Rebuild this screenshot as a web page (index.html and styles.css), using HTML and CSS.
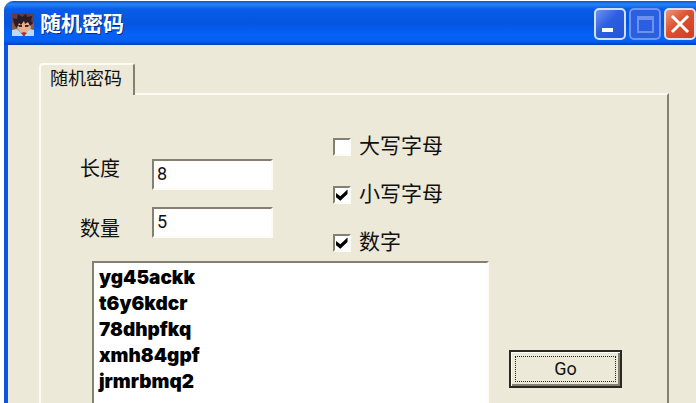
FILE: index.html
```
<!DOCTYPE html>
<html lang="zh-CN">
<head>
    <meta charset="UTF-8">
    <meta name="viewport" content="width=device-width, initial-scale=1.0">
    <title>随机密码</title>
    <link rel="stylesheet" href="styles.css">
</head>
<body>
    <div class="window">
        <header class="titlebar">
            <svg class="app-icon" viewBox="0 0 22 23" aria-hidden="true">
                <rect width="22" height="23" fill="#8a5a48"/>
                <path d="M0 0h22v9l-3 3H3L0 9z" fill="#60404a"/>
                <path d="M5 8l5-2 8 1 1 8-4 5H9l-4-5z" fill="#e8b08c"/>
                <path d="M2 9L1 5l4 1 1-5 4 3 4-3 1 3 5-1-1 5 2 2-3 3-2-4-3 2-1-3-3 4-2-2-2 5-2-2z" fill="#2c1a24"/>
                <path d="M6 12h4v2H7zM13 12h4l-1 2h-3z" fill="#3b2630"/>
                <path d="M0 17l5-1 5 5 1 2H0zM22 17l-4-1-5 5v2h9z" fill="#b8dcf6"/>
                <path d="M9 20l3-1 3 1-3 3z" fill="#b2352c"/>
            </svg>
            <h1>随机密码</h1>
            <div class="controls">
                <button class="control" type="button" aria-label="最小化">
                    <svg viewBox="0 0 28 28"><path d="M6 18h11v4H6z" fill="#fff"/></svg>
                </button>
                <button class="control control-disabled" type="button" aria-label="最大化" disabled>
                    <svg viewBox="0 0 28 28"><path d="M6 6h17v17H6zM8 10v11h13V10z" fill="#6c91ee" fill-rule="evenodd"/></svg>
                </button>
                <button class="control control-close" type="button" aria-label="关闭">
                    <svg viewBox="0 0 28 28"><path d="M7 7l14 14M21 7L7 21" stroke="#fff" stroke-width="3" stroke-linecap="square"/></svg>
                </button>
            </div>
        </header>

        <main class="content">
            <button class="tab" type="button">随机密码</button>
            <form class="panel">
                <div class="options">
                    <div class="fields">
                        <label for="length">长度</label>
                        <input type="text" id="length" value="8">
                        <label for="count">数量</label>
                        <input type="text" id="count" value="5">
                    </div>
                    <div class="checks">
                        <label><input type="checkbox">大写字母</label>
                        <label><input type="checkbox" checked>小写字母</label>
                        <label><input type="checkbox" checked>数字</label>
                    </div>
                </div>
                <div class="output">
                    <textarea class="result" aria-label="密码" spellcheck="false">yg45ackk
t6y6kdcr
78dhpfkq
xmh84gpf
jrmrbmq2</textarea>
                    <button class="go" type="button"><span>Go</span></button>
                </div>
            </form>
        </main>
    </div>
</body>
</html>
```
FILE: styles.css
```
* {
    box-sizing: border-box;
}
html, body {
    height: 100%;
    margin: 0;
    overflow: hidden;
    background: #fff;
    font-family: "Liberation Sans", "Noto Sans CJK SC", sans-serif;
    color: #111;
}
button, input, textarea {
    margin: 0;
    font-family: inherit;
    color: inherit;
}
.window {
    display: flex;
    flex-direction: column;
    height: 100%;
    margin-left: 4px;
    padding-top: 1px;
}
.titlebar {
    display: flex;
    flex: none;
    align-items: center;
    height: 44px;
    padding: 2px 0 0 8px;
    border-radius: 9px 0 0 0;
    background: linear-gradient(#0a4fd0 0, #2c82f8 3px, #0a5ce8 8px, #0455e0 22px, #0562f6 34px, #0560f2 40px, #0340b8 44px);
}
.app-icon {
    width: 22px;
    height: 23px;
}
.titlebar h1 {
    flex: 1;
    margin: 0 0 0 6px;
    font-size: 21px;
    line-height: 24px;
    color: #fff;
    text-shadow: 1px 1px #0a2a80;
}
.controls {
    display: flex;
    gap: 3px;
}
.control {
    width: 32px;
    height: 32px;
    padding: 0;
    border: 2px solid #d4e0fa;
    border-radius: 5px;
    background: linear-gradient(135deg, #6c94f4, #2c5ee0 45%, #2454d8);
}
.control svg {
    display: block;
}
.control-disabled {
    border-color: #6f95f0;
    background: #2a5fe2;
}
.control-close {
    background: linear-gradient(135deg, #ee9478, #dc5030 45%, #cc4020);
}
.content {
    display: flex;
    flex: 1;
    flex-direction: column;
    align-items: flex-start;
    padding: 18px 27px 0 31px;
    border-left: 4px solid #0a55e4;
    background: #ece9d8;
}
.tab {
    z-index: 1;
    height: 32px;
    margin-bottom: -2px;
    padding: 0 11px 2px 9px;
    border: 2px solid #fcfbf4;
    border-right-color: #858070;
    border-bottom: 0;
    border-radius: 4px 3px 0 0;
    background: #ece9d8;
    font-size: 18px;
    line-height: 24px;
}
.panel {
    display: flex;
    flex: 1;
    flex-direction: column;
    align-self: stretch;
    padding: 39px 45px 0 39px;
    border: 2px solid #fcfbf4;
    border-right-color: #858070;
    border-bottom: 0;
}
.options {
    display: flex;
    gap: 60px;
}
.fields {
    display: grid;
    grid-template-columns: 40px 121px;
    gap: 17px 32px;
    align-content: start;
    padding-top: 25px;
    font-size: 20px;
    line-height: 24px;
}
.fields label[for="length"] {
    margin-top: -2px;
}
.fields label[for="count"] {
    padding-top: 10px;
}
.fields input {
    width: 100%;
    height: 31px;
    padding: 0 3px 2px;
    border: 2px solid #858070;
    border-right-color: #fcfbf4;
    border-bottom-color: #fcfbf4;
    background: #fff;
    font-family: Roboto, sans-serif;
    font-size: 18px;
    outline: none;
}
.checks {
    display: flex;
    flex-direction: column;
    gap: 24px;
}
.checks label {
    display: flex;
    align-items: center;
    gap: 8px;
    font-size: 21px;
    line-height: 24px;
}
.checks input {
    appearance: none;
    width: 18px;
    height: 18px;
    margin: 2px 0 0;
    border: 2px solid #858070;
    border-right-color: #fcfbf4;
    border-bottom-color: #fcfbf4;
    background: #fff;
}
.checks input:checked::before {
    content: "";
    display: block;
    width: 12px;
    height: 12px;
    margin: 1px;
    background: #000;
    clip-path: polygon(0 33%, 36% 60%, 96% 4%, 96% 42%, 36% 98%, 0 69%);
}
.output {
    display: flex;
    flex: 1;
    justify-content: space-between;
    min-height: 0;
    margin-top: 7px;
    padding-left: 12px;
}
.result {
    width: 397px;
    padding: 2px 5px;
    border: 2px solid #858070;
    border-right-color: #fcfbf4;
    border-bottom: 0;
    background: #fff;
    font-family: Inter, "Liberation Sans", sans-serif;
    font-size: 19px;
    font-weight: 900;
    line-height: 26px;
    color: #000;
    resize: none;
    outline: none;
    overflow: hidden;
}
.go {
    width: 113px;
    height: 38px;
    margin-top: 89px;
    padding: 4px;
    border: 2px solid #2a2822;
    background: #ece9d8;
    box-shadow: inset 1px 1px #fff, inset -2px -2px #858070;
    font-family: Roboto, sans-serif;
    font-size: 18px;
}
.go span {
    display: block;
    border: 1px dotted #222;
    line-height: 24px;
}
```
